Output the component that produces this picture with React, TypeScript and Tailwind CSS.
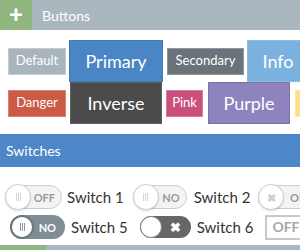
const font = { fontFamily: "Lato, 'Open Sans', sans-serif" };

const Btn = ({
  label,
  className,
}: {
  label: string;
  className: string;
}) => (
  <div
    className={`shrink-0 flex items-center justify-center border text-white ${className}`}
  >
    {label}
  </div>
);

const Grip = ({ color }: { color: string }) => (
  <span className={`flex gap-[1px]`}>
    <span className={`w-[1px] h-[8px] ${color}`} />
    <span className={`w-[1px] h-[8px] ${color}`} />
    <span className={`w-[1px] h-[8px] ${color}`} />
  </span>
);

const LightSwitch = ({
  text,
  knob,
  className,
}: {
  text: string;
  knob: React.ReactNode;
  className: string;
}) => (
  <div
    className={`relative shrink-0 h-[24px] rounded-full border border-[#cdcdcd] bg-[#f3f3f3] flex items-center justify-end pr-[6px] ${className}`}
  >
    <div className="absolute left-[-1px] top-[-2px] w-[26px] h-[26px] rounded-full bg-white border border-[#cfcfcf] shadow-[0_1px_2px_rgba(0,0,0,0.15)] flex items-center justify-center">
      {knob}
    </div>
    <span className="text-[11px] font-bold text-[#9a9a9a] leading-none">
      {text}
    </span>
  </div>
);

const Label = ({ text, className }: { text: string; className: string }) => (
  <span className={`shrink-0 text-[15px] text-[#333] leading-none ${className}`}>
    {text}
  </span>
);

export default function App() {
  return (
    <div className="w-[300px] h-[250px] overflow-hidden bg-white" style={font}>
      {/* Buttons header */}
      <div className="flex h-[30px]">
        <div className="w-[32px] bg-[#8fb67f] flex items-center justify-center text-white text-[24px] font-black leading-none pb-[2px]">
          +
        </div>
        <div className="flex-1 bg-[#abb7bf] flex items-center pl-[10px] text-white text-[14px]">
          Buttons
        </div>
      </div>

      {/* Buttons */}
      <div className="pt-[10px] pl-[8px]">
        <div className="flex items-center h-[42px]">
          <Btn label="Default" className="w-[58px] h-[27px] text-[13px] bg-[#a9b5bc] border-[#c3ccd1]" />
          <Btn label="Primary" className="ml-[3px] w-[94px] h-[42px] text-[18px] bg-[#4a86c5] border-[#3f7bbb]" />
          <Btn label="Secondary" className="ml-[4px] w-[77px] h-[27px] text-[13px] bg-[#6a737a] border-[#8f969b]" />
          <Btn label="Info" className="ml-[3px] w-[62px] h-[42px] text-[18px] bg-[#7ab1de] border-[#8bbde4]" />
        </div>
        <div className="flex items-center h-[42px]">
          <Btn label="Danger" className="w-[58px] h-[27px] text-[13px] bg-[#cb5a46] border-[#d9826f]" />
          <Btn label="Inverse" className="ml-[4px] w-[92px] h-[42px] text-[18px] bg-[#4b4b4b] border-[#5e5e5e]" />
          <Btn label="Pink" className="ml-[4px] w-[37px] h-[27px] text-[13px] bg-[#c8507b] border-[#d87c9c]" />
          <Btn label="Purple" className="ml-[5px] w-[82px] h-[42px] text-[18px] bg-[#8e83bd] border-[#7c70ad]" />
          <Btn label="Warning" className="ml-[5px] w-[60px] h-[27px] text-[13px] bg-[#fcdf8c] border-[#fde6a6]" />
        </div>
      </div>

      {/* Switches header */}
      <div className="mt-[10px] h-[33px] bg-[#4d87c7] flex items-center pl-[6px] text-white text-[14px]">
        Switches
      </div>

      {/* Switch row 1 */}
      <div className="mt-[18px] flex items-center pl-[5px] h-[24px]">
        <LightSwitch text="OFF" className="w-[57px]" knob={<Grip color="bg-[#d5d5d5]" />} />
        <Label text="Switch 1" className="ml-[5px]" />
        <LightSwitch text="NO" className="ml-[9px] w-[54px]" knob={<Grip color="bg-[#d5d5d5]" />} />
        <Label text="Switch 2" className="ml-[7px]" />
        <LightSwitch
          text="OFF"
          className="ml-[8px] w-[60px]"
          knob={<span className="text-[11px] font-bold text-[#cfcfcf] leading-none">✖</span>}
        />
      </div>

      {/* Switch row 2 */}
      <div className="mt-[5px] flex items-center pl-[10px] h-[26px]">
        <div className="relative shrink-0 w-[55px] h-[24px] rounded-full bg-[#7f8d95] flex items-center justify-end pr-[9px]">
          <div className="absolute left-0 top-0 w-[24px] h-[24px] rounded-full bg-white border-2 border-[#6b7a82] flex items-center justify-center">
            <Grip color="bg-[#8a979e]" />
          </div>
          <span className="text-[11px] font-bold text-white leading-none">NO</span>
        </div>
        <Label text="Switch 5" className="ml-[6px]" />
        <div className="relative shrink-0 ml-[12px] w-[51px] h-[22px] rounded-full bg-[#666] flex items-center justify-end pr-[10px]">
          <div className="absolute left-0 top-0 w-[22px] h-[22px] rounded-full bg-white border border-[#888]" />
          <span className="text-[13px] font-bold text-white leading-none">✖</span>
        </div>
        <Label text="Switch 6" className="ml-[6px]" />
        <div className="shrink-0 ml-[12px] h-[25px] w-[50px] border-2 border-[#c8c8c8] flex items-center">
          <span className="pl-[5px] text-[14px] font-bold text-[#a8a8a8] leading-none">OFF</span>
          <span className="ml-[5px] w-[6px] h-full bg-[#c8c8c8]" />
        </div>
      </div>

      {/* Next section header */}
      <div className="mt-[5px] flex h-[30px]">
        <div className="w-[46px] bg-[#8fb67f]" />
        <div className="flex-1 bg-[#abb7bf]" />
      </div>
    </div>
  );
}
